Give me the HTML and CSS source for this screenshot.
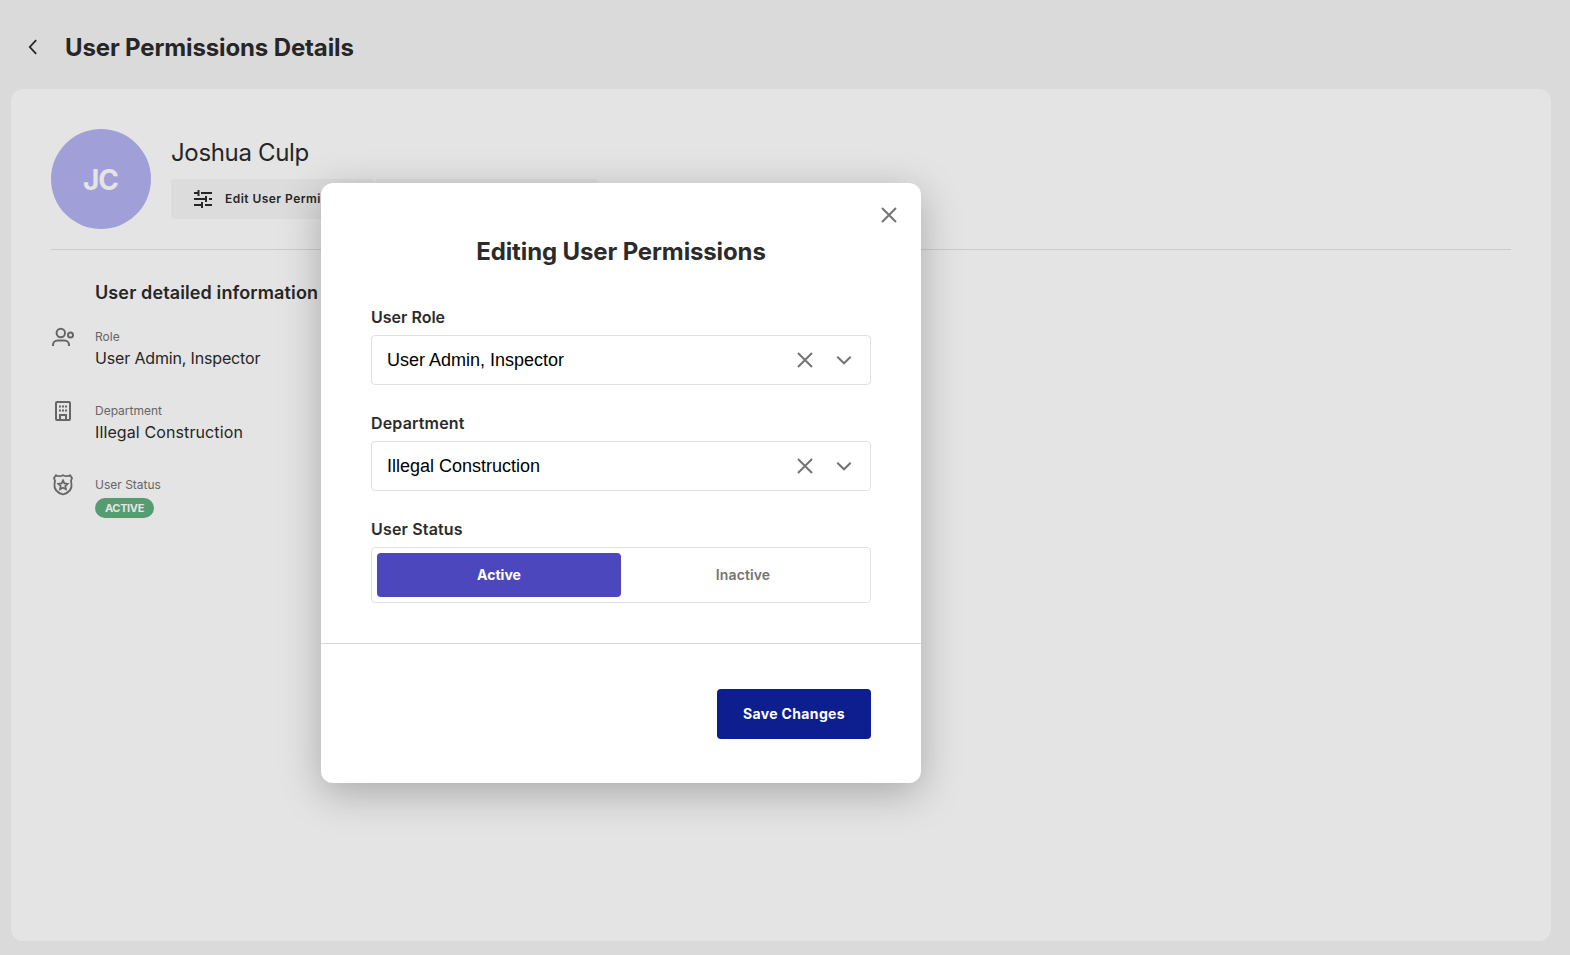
FILE: index.html
```
<!DOCTYPE html>
<html lang="en">
<head>
<meta charset="utf-8">
<title>User Permissions Details</title>
<link rel="stylesheet" href="styles.css">
</head>
<body>
<div class="page">
  <header class="topbar">
    <svg class="back" viewBox="0 0 24 24"><path d="M15.200 5.200 8.800 12l6.400 6.800"/></svg>
    <h1 class="page-title">User Permissions Details</h1>
  </header>
  <main class="panel">
    <section class="profile">
      <div class="avatar"><span>JC</span></div>
      <div class="profile-main">
        <div class="name">Joshua Culp</div>
        <div class="actions">
          <button class="action edit">
            <svg class="tune" viewBox="0 0 20 20"><path d="M1 4h5M5.500 1v6M8 4h11M1 10h12M13 7v6M16 10h3M1 16h7M9 13v6M12 16h7"/></svg>
            <span>Edit User Permissions</span>
          </button>
          <button class="action other"></button>
        </div>
      </div>
    </section>
    <section class="info">
      <h2 class="info-title">User detailed information</h2>
      <div class="row">
        <svg class="icon" viewBox="0 0 24 24"><circle cx="9.800" cy="7" r="4.200"/><path d="M2 20v-1.200a4.500 4.500 0 0 1 4.500-4.300h7a4.500 4.500 0 0 1 4.500 4.300V20"/><circle cx="19.500" cy="9" r="2.500"/></svg>
        <div class="cell"><div class="label">Role</div><div class="value v1">User Admin, Inspector</div></div>
      </div>
      <div class="row">
        <svg class="icon raised" viewBox="0 0 24 24"><rect x="5" y="3" width="14" height="18" rx="1"/><path d="M9 21v-5h6v5"/><path stroke-dasharray="2 1" d="M8 7.500h9M8 11.500h9"/></svg>
        <div class="cell"><div class="label">Department</div><div class="value v2">Illegal Construction</div></div>
      </div>
      <div class="row">
        <svg class="icon shield raised" viewBox="0 0 24 24"><path d="M5 2.200Q8.500 4.200 12 2.200Q15.500 4.200 19 2.200L21 5Q19.200 8 20.500 11Q21.500 18.500 12 21.500Q2.500 18.500 3.500 11Q4.800 8 3 5Z"/><path d="M12 7.500l1.400 2.900 3.200.4-2.300 2.200.6 3.200-2.900-1.500-2.900 1.500.6-3.200-2.300-2.200 3.200-.4z"/></svg>
        <div class="cell"><div class="label">User Status</div><div class="badge">ACTIVE</div></div>
      </div>
    </section>
  </main>
</div>
<div class="modal">
  <svg class="close x" viewBox="0 0 24 24"><path d="M5 5l14 14M19 5 5 19"/></svg>
  <div class="modal-body">
    <h2 class="modal-title">Editing User Permissions</h2>
    <div class="field">
      <div class="field-label">User Role</div>
      <div class="select"><span class="select-value">User Admin, Inspector</span><svg class="x" viewBox="0 0 24 24"><path d="M5 5l14 14M19 5 5 19"/></svg><svg class="x" viewBox="0 0 24 24"><path d="M5.300 8.700 12 15.300l6.700-6.600"/></svg></div>
    </div>
    <div class="field">
      <div class="field-label f2">Department</div>
      <div class="select"><span class="select-value">Illegal Construction</span><svg class="x" viewBox="0 0 24 24"><path d="M5 5l14 14M19 5 5 19"/></svg><svg class="x" viewBox="0 0 24 24"><path d="M5.300 8.700 12 15.300l6.700-6.600"/></svg></div>
    </div>
    <div class="field">
      <div class="field-label f3">User Status</div>
      <div class="toggle"><div class="option on">Active</div><div class="option">Inactive</div></div>
    </div>
  </div>
  <footer class="modal-footer"><button class="save">Save Changes</button></footer>
</div>
</body>
</html>
```
FILE: styles.css
```
* { box-sizing: border-box; }
body { margin: 0; width: 1570px; height: 955px; overflow: hidden; background: #dadada; color: #262626; font-family: Inter, sans-serif; }
h1, h2 { margin: 0; }
button { font-family: inherit; border: 0; margin: 0; }
svg { fill: none; stroke: currentColor; stroke-width: 2; flex: none; display: block; }
.page { height: 955px; padding: 0 19px 14px 11px; display: flex; flex-direction: column; }
.topbar { height: 89px; padding: 5px 0 0 10px; display: flex; align-items: center; gap: 20px; flex: none; }
.back { width: 24px; height: 24px; stroke-width: 1.8; }
.page-title { padding-top: 2px; font-size: 24px; line-height: 34px; font-weight: 700; letter-spacing: -.13px; white-space: nowrap; }
.panel { flex: 1; background: #e4e4e4; border-radius: 12px; padding: 40px; }
.profile { display: flex; gap: 20px; height: 121px; border-bottom: 1px solid #cbcbcb; }
.avatar { width: 100px; height: 100px; padding: 2px 1px 0 0; border-radius: 50%; background: #a09fd8; color: #e4e4e4; font-size: 28px; font-weight: 700; letter-spacing: -1px; display: flex; align-items: center; justify-content: center; }
.name { height: 50px; padding-top: 7px; font-size: 24px; line-height: 34px; letter-spacing: -.34px; white-space: nowrap; }
.actions { display: flex; gap: 1px; }
.action { height: 40px; border-radius: 4px; background: #dcdcdc; color: #262626; display: flex; align-items: center; }
.edit { width: 203px; padding: 0 0 1px 22px; gap: 12px; font-size: 12px; font-weight: 600; letter-spacing: .46px; white-space: nowrap; overflow: hidden; }
.other { width: 224px; }
.tune { width: 20px; height: 20px; }
.info { padding-top: 27px; }
.info-title { padding-left: 44px; height: 48px; font-size: 18px; line-height: 32px; font-weight: 600; letter-spacing: .12px; white-space: nowrap; }
.row { display: flex; gap: 20px; height: 74px; }
.icon { width: 24px; height: 24px; margin-top: 1px; color: #666; }
.raised { margin-top: 0; }
.shield { stroke-width: 1.8; }
.label { font-size: 12px; line-height: 22px; height: 22px; padding-top: 1px; color: #666; white-space: nowrap; }
.value { font-size: 16px; line-height: 22px; white-space: nowrap; }
.v1 { letter-spacing: -.16px; }
.v2 { letter-spacing: .11px; }
.badge { width: 59px; height: 20px; border-radius: 10px; background: #559d70; color: #e4e4e4; font-size: 11px; font-weight: 700; letter-spacing: -.35px; line-height: 20px; text-align: center; margin-top: 3px; }
.modal { position: absolute; left: 321px; top: 183px; width: 600px; height: 600px; border-radius: 12px; background: #fff; color: #2b2b2b; box-shadow: 0 10px 40px rgba(0,0,0,.26); display: flex; flex-direction: column; }
.x { width: 24px; height: 24px; color: #747474; }
.close { position: absolute; right: 20px; top: 20px; }
.modal-body { height: 461px; padding: 51px 50px 0; border-bottom: 1px solid #d9d9d9; }
.modal-title { font-size: 24px; line-height: 36px; height: 71px; font-weight: 700; letter-spacing: -.13px; text-align: center; white-space: nowrap; }
.field { margin-bottom: 26px; }
.field-label { font-size: 16px; line-height: 24px; height: 30px; font-weight: 600; }
.f2, .f3 { letter-spacing: .16px; }
.select { height: 50px; border: 1px solid #e0e0e0; border-radius: 4px; display: flex; align-items: center; gap: 15px; padding: 0 14px 0 15px; }
.select-value { flex: 1; font-family: "Liberation Sans", Arial, sans-serif; font-size: 18px; color: #000; }
.toggle { height: 56px; border: 1px solid #e0e0e0; border-radius: 4px; padding: 5px; display: flex; }
.option { flex: 1; display: flex; align-items: center; justify-content: center; padding-bottom: 2px; border-radius: 4px; font-size: 14px; font-weight: 600; letter-spacing: .1px; color: #747474; }
.on { background: #4c47bd; color: #fff; font-weight: 700; letter-spacing: 0; }
.modal-footer { flex: 1; display: flex; justify-content: flex-end; padding: 45px 50px 0; }
.save { width: 154px; height: 50px; border-radius: 4px; background: #0d1e8f; color: #fff; font-size: 14px; font-weight: 700; letter-spacing: .35px; padding: 0 0 2px; }
```
